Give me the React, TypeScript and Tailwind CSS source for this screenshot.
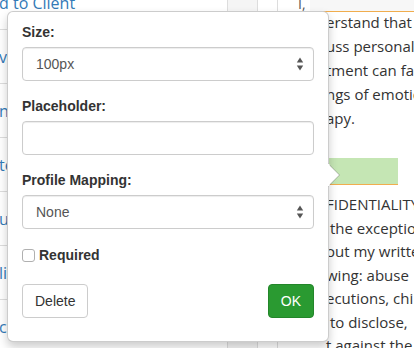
import React from "react";

const leftRows = ["d to Client", "view Intake", "nvoice", "templates", "ubmit", "lient", "ce"];

const topLines = ["erstand that I", "uss personal", "tment can fal", "ngs of emotio", "apy."];
const bottomLines = [
  "FIDENTIALITY",
  " the exception",
  "out my writte",
  "wing: abuse",
  "ecutions, chi",
  " to disclose,",
  "t against the",
  "fidentiality",
];

function SelectArrows() {
  return (
    <svg width="8" height="14" viewBox="0 0 8 14" className="shrink-0">
      <path d="M4 0.5 L7.2 5.5 L0.8 5.5 Z" fill="#555" />
      <path d="M4 13.5 L7.2 8.5 L0.8 8.5 Z" fill="#555" />
    </svg>
  );
}

function FakeSelect({ value }: { value: string }) {
  return (
    <div className="flex h-[34px] items-center justify-between rounded-[4px] border border-[#ccc] bg-white pl-[13px] pr-[9px] text-[14px] text-[#555] shadow-[inset_0_1px_1px_rgba(0,0,0,0.075)]">
      <span>{value}</span>
      <SelectArrows />
    </div>
  );
}

function Label({ children }: { children: React.ReactNode }) {
  return <div className="mb-[5px] text-[14px] font-bold leading-[20px] text-[#333]">{children}</div>;
}

function Popover() {
  return (
    <div className="absolute left-[7px] top-[11px] h-[331px] w-[322px] rounded-[6px] border border-[rgba(0,0,0,0.2)] bg-white px-[14px] pt-[10px] shadow-[0_5px_10px_rgba(0,0,0,0.2)] [font-family:'Liberation_Sans',Arial,sans-serif]">
      <Label>Size:</Label>
      <FakeSelect value="100px" />

      <div className="mt-[15px]">
        <Label>Placeholder:</Label>
        <div className="h-[34px] rounded-[4px] border border-[#ccc] bg-white shadow-[inset_0_1px_1px_rgba(0,0,0,0.075)]" />
      </div>

      <div className="mt-[15px]">
        <Label>Profile Mapping:</Label>
        <FakeSelect value="None" />
      </div>

      <div className="mt-[16px] flex h-[20px] items-center gap-[4px]">
        <span className="h-[13px] w-[13px] rounded-[3px] border border-[#b0b0b0] bg-white" />
        <span className="text-[14px] font-bold text-[#333]">Required</span>
      </div>

      <div className="mt-[19px] flex items-center justify-between">
        <button className="h-[34px] rounded-[4px] border border-[#ccc] bg-white px-[12px] text-[14px] text-[#333]">
          Delete
        </button>
        <button className="h-[34px] rounded-[4px] border border-[#23862a] bg-[#2a9a31] px-[12px] text-[14px] text-white">
          OK
        </button>
      </div>

      <svg width="13" height="24" viewBox="0 0 13 24" className="absolute left-[320px] top-[151px]">
        <path d="M0 0.5 L11.5 12 L0 23.5" fill="white" stroke="rgba(0,0,0,0.25)" strokeWidth="1" />
        <rect x="0" y="1" width="1.5" height="22" fill="white" />
      </svg>
    </div>
  );
}

export default function App() {
  return (
    <div className="relative flex h-[348px] w-[414px] overflow-hidden bg-white">
      {/* left list */}
      <div className="-mt-[24px] w-[227px] shrink-0 [font-family:'Open_Sans',sans-serif]">
        {leftRows.map((r) => (
          <div key={r} className="flex h-[54px] items-center border-b border-[#ddd] -ml-[1px] text-[16px] text-[#337ab7]">
            {r}
          </div>
        ))}
      </div>

      {/* middle table columns */}
      <div className="w-[30px] shrink-0 border-l border-[#ddd] bg-[#f5f5f5]" />
      <div className="w-[20px] shrink-0 border-l border-[#ddd]" />
      <div className="relative w-[33px] shrink-0 border-l border-[#ddd] [font-family:'Open_Sans',sans-serif]">
        <div className="absolute -top-[7px] left-[20px] text-[14px] text-[#555]">I,</div>
      </div>

      {/* right document panel */}
      <div className="flex-1 [font-family:'Open_Sans',sans-serif] text-[15px] leading-[24px] text-[#333]">
        <div className="h-[11px] bg-[#f7f7f7]" />
        <div className="border-t border-[#f0ad4e] pl-[16px]">
          <div className="-mt-[2px]">
            {topLines.map((l) => (
              <div key={l} className="whitespace-pre">{l}</div>
            ))}
          </div>
          <div className="mt-[28px] h-[27px] w-[72px] border-b border-[#f0ad4e] bg-[#c5e6b4]" />
          <div className="mt-[8px] leading-[23.5px]">
            {bottomLines.map((l) => (
              <div key={l} className="whitespace-pre">{l}</div>
            ))}
          </div>
        </div>
      </div>

      <Popover />
    </div>
  );
}
